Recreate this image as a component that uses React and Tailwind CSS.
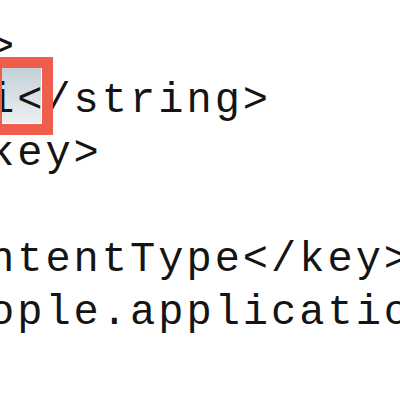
export default function App() {
  const line =
    "h-[53px] leading-[53px] whitespace-pre text-[42px] tracking-[3px] text-[#141414] ml-[-11px]";
  return (
    <div className="relative w-[400px] h-[400px] overflow-hidden bg-white" style={{ fontFamily: '"Courier New", "Liberation Mono", monospace' }}>
      {/* selection highlight behind the "i" */}
      <div className="absolute left-0 top-[67px] w-[41px] h-[56px] bg-gradient-to-b from-[#c3d0d8] to-[#eceff1]" />
      <div className="relative flex flex-col pt-[22px]">
        <div className={line}>{">"}</div>
        <div className={line}>{"i</string>"}</div>
        <div className={line}>{"key>"}</div>
        <div className={line}>{" "}</div>
        <div className={line}>{"ntentType</key>"}</div>
        <div className={line}>{"ople.application"}</div>
      </div>
      {/* red highlight box */}
      <div className="absolute left-[-9px] top-[57px] w-[62px] h-[78px] border-[11px] border-[#ef5e4d]" />
    </div>
  );
}
